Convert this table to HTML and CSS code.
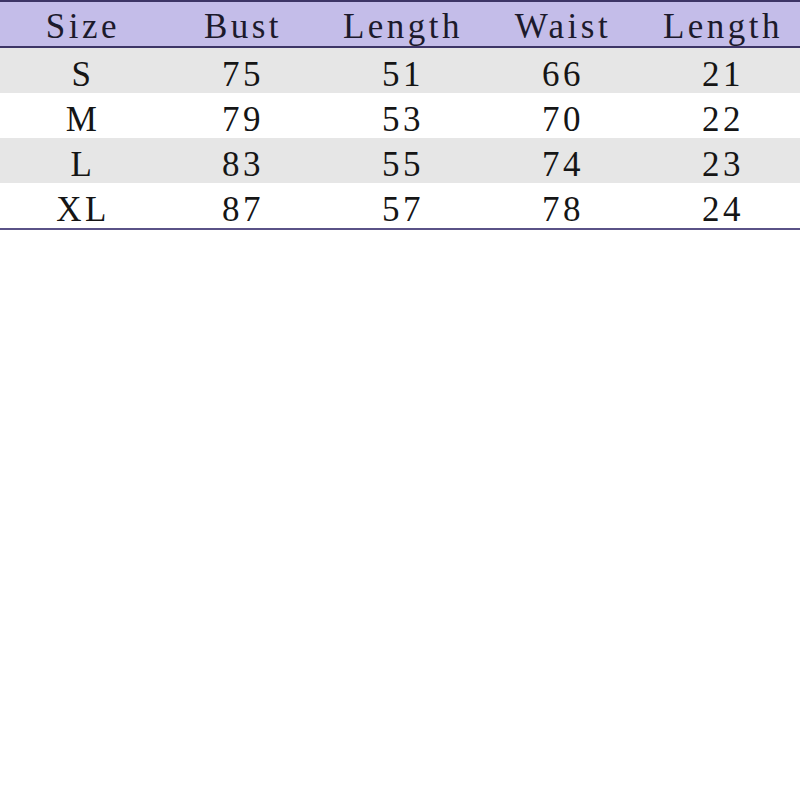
FILE: index.html
```html
<!DOCTYPE html>
<html>
<head>
<meta charset="utf-8">
<link rel="stylesheet" href="styles.css">
</head>
<body>
<div class="size-table">
  <div class="row head">
    <div class="cell">Size</div><div class="cell">Bust</div><div class="cell">Length</div><div class="cell">Waist</div><div class="cell">Length</div>
  </div>
  <div class="row shade">
    <div class="cell">S</div><div class="cell">75</div><div class="cell">51</div><div class="cell">66</div><div class="cell">21</div>
  </div>
  <div class="row">
    <div class="cell">M</div><div class="cell">79</div><div class="cell">53</div><div class="cell">70</div><div class="cell">22</div>
  </div>
  <div class="row shade">
    <div class="cell">L</div><div class="cell">83</div><div class="cell">55</div><div class="cell">74</div><div class="cell">23</div>
  </div>
  <div class="row last">
    <div class="cell">XL</div><div class="cell">87</div><div class="cell">57</div><div class="cell">78</div><div class="cell">24</div>
  </div>
</div>
</body>
</html>
```

FILE: styles.css
```css
html, body {
  margin: 0;
  padding: 0;
  background: #ffffff;
}
.size-table {
  width: 800px;
  font-family: "Liberation Serif", "Times New Roman", serif;
  font-size: 35px;
  color: #151515;
}
.row {
  display: grid;
  grid-template-columns: repeat(5, 1fr);
  height: 45px;
  align-items: center;
  background: #ffffff;
}
.row.head {
  background: #c4bde9;
  height: 44px;
  border-top: 2px solid #3d3566;
  border-bottom: 2px solid #3d3566;
  color: #1c1a2c;
}
.row.shade {
  background: #e6e6e6;
}
.row.last {
  border-bottom: 2px solid #5a5287;
}
.cell {
  text-align: center;
  letter-spacing: 3.5px;
  line-height: 45px;
  padding-top: 4px;
  padding-left: 6px;
  white-space: nowrap;
}
.row.head .cell {
  padding-top: 2px;
}
```
